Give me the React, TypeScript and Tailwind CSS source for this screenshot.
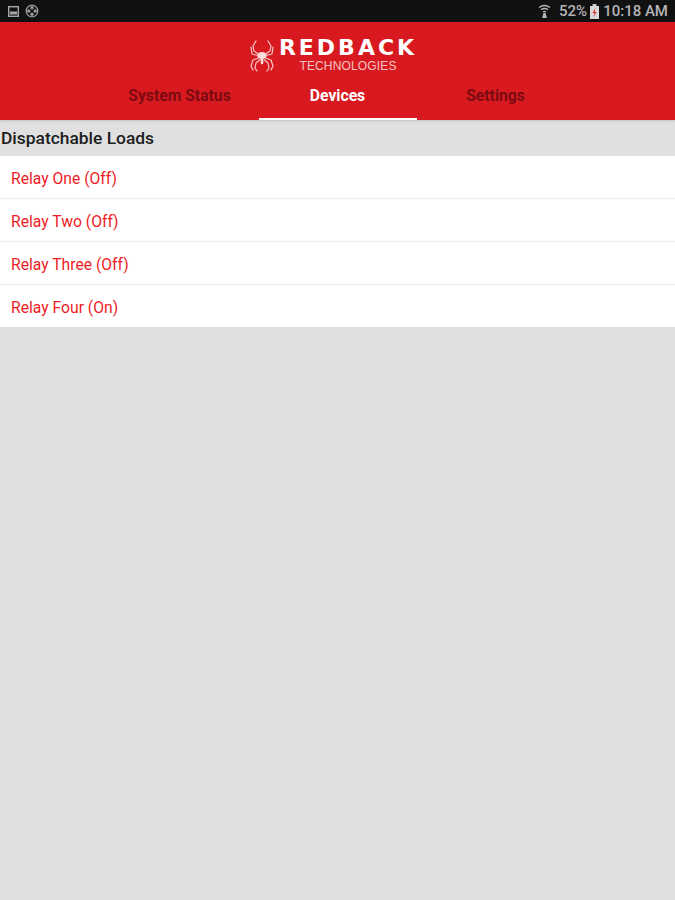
const relays = ["Relay One (Off)", "Relay Two (Off)", "Relay Three (Off)", "Relay Four (On)"];

function SpiderLogo() {
  return (
    <svg width="24" height="32" viewBox="0 0 24 32" fill="none" stroke="#f4c8c8" strokeWidth="1.200" strokeLinecap="round" strokeLinejoin="round">
      <ellipse cx="12" cy="15.500" rx="4.800" ry="3.600" fill="#f8dcdc" stroke="none" />
      <path d="M12 19v4" strokeWidth="2.600" stroke="#f8dcdc" />
      <path d="M8.500 14 4 11 3 6l3-5" />
      <path d="M15.500 14 20 11l1-5-3-5" />
      <path d="M8 15.500 2 14 1 7" />
      <path d="M16 15.500l6-1.500 1-7" />
      <path d="M8.500 18 3 20l-2 6 2 4" />
      <path d="M15.500 18 21 20l2 6-2 4" />
      <path d="M10 19.500 6 23l-1 5 2 3" />
      <path d="M14 19.500 18 23l1 5-2 3" />
    </svg>
  );
}

function StatusBar() {
  return (
    <div className="flex h-[22px] items-center justify-between bg-[#111111] pl-[8px] pr-[7px] text-[#b4b4b4]">
      <div className="flex items-center gap-[6px]">
        <svg width="11" height="11" viewBox="0 0 11 11">
          <rect x="0.700" y="0.700" width="9.600" height="9.600" fill="none" stroke="#a8a8a8" strokeWidth="1.400" />
          <rect x="2" y="5.500" width="7" height="3" fill="#a8a8a8" />
        </svg>
        <svg width="14" height="14" viewBox="0 0 14 14" fill="#9a9a9a">
          <circle cx="7" cy="7" r="5.800" fill="none" stroke="#9a9a9a" strokeWidth="1.300" />
          <circle cx="7" cy="3.800" r="1.700" />
          <circle cx="7" cy="10.200" r="1.700" />
          <circle cx="3.800" cy="7" r="1.700" />
          <circle cx="10.200" cy="7" r="1.700" />
        </svg>
      </div>
      <div className="flex items-center text-[15px] font-medium [font-family:Roboto,sans-serif]">
        <svg className="mr-[8px]" width="13" height="14" viewBox="0 0 13 14" fill="none" stroke="#b4b4b4">
          <path d="M1 3.500Q6.500 -0.500 12 3.500" strokeWidth="1.300" />
          <path d="M3 5.800Q6.500 3.200 10 5.800" strokeWidth="1.300" />
          <path d="M5 8Q6.500 7 8 8" strokeWidth="1.300" />
          <path d="M5.500 9h2l1.500 5H4z" fill="#b4b4b4" stroke="none" />
        </svg>
        <span>52%</span>
        <svg className="ml-[3px] mr-[4px]" width="9" height="15" viewBox="0 0 9 15">
          <rect x="2.500" y="0" width="4" height="2" fill="#c8c8c8" />
          <rect x="0" y="2" width="9" height="13" fill="#d8d8d8" />
          <path d="M5.500 4 2.500 9h2l-1 4 3-5h-2z" fill="#d8201f" />
        </svg>
        <span>10:18 AM</span>
      </div>
    </div>
  );
}

function Header() {
  return (
    <div className="relative flex flex-col bg-[#d81a20] shadow-[0_1px_2px_rgba(0,0,0,0.15)]">
      <div className="flex h-[58px] items-center justify-center pt-[10px] pr-[8px]">
        <SpiderLogo />
        <div className="ml-[5px] flex flex-col items-center">
          <span className="text-[22px] leading-[16px] font-bold tracking-[3px] text-white [font-family:'DejaVu_Sans',sans-serif]">REDBACK</span>
          <span className="mt-[4px] text-[12px] leading-[12px] tracking-[0.15px] text-[#f6c4c4] [font-family:'Liberation_Sans',sans-serif]">TECHNOLOGIES</span>
        </div>
      </div>
      <div className="flex justify-center text-[15.700px] font-bold [font-family:Roboto,sans-serif]">
        <div className="flex h-[40px] w-[158px] items-center justify-center pb-[9px] text-[#7c0a10]">System Status</div>
        <div className="flex h-[40px] w-[158px] items-center justify-center border-b-[2px] border-white pb-[7px] text-white">Devices</div>
        <div className="flex h-[40px] w-[158px] items-center justify-center pb-[9px] text-[#7c0a10]">Settings</div>
      </div>
    </div>
  );
}

export default function App() {
  return (
    <div className="flex min-h-[900px] flex-col bg-[#e0e0e0] [font-family:Roboto,sans-serif]">
      <StatusBar />
      <Header />
      <div className="flex h-[36px] items-center pl-[1px] pt-[1px] text-[17.400px] font-medium text-[#1c1c1c]">Dispatchable Loads</div>
      <div className="flex flex-col gap-[1px] bg-[#eeeeee]">
        {relays.map((relay) => (
          <div key={relay} className="flex h-[42px] items-center bg-white pl-[11px] pt-[3px] text-[15.700px] text-[#ee1c25]">
            {relay}
          </div>
        ))}
      </div>
    </div>
  );
}
